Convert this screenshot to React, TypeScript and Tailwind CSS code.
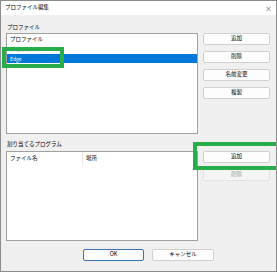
import React from "react";

const font = { fontFamily: '"Noto Sans CJK JP", "Noto Sans", sans-serif' };

function Btn({ label, disabled, primary }: { label: string; disabled?: boolean; primary?: boolean }) {
  return (
    <div
      className={
        "h-[12px] w-full flex items-center justify-center text-[5.5px] leading-none rounded-[2px] border " +
        (primary
          ? "border-[#3b6fa8] bg-[#fdfdfd] text-black"
          : disabled
          ? "border-[#e2e2e2] bg-[#f5f5f5] text-[#9a9a9a]"
          : "border-[#d0d0d0] bg-[#fdfdfd] text-black")
      }
    >
      {label}
    </div>
  );
}

export default function App() {
  return (
    <div
      style={font}
      className="relative w-[277px] h-[272px] border border-[#8c8c8c] bg-[#f0f0f0] flex flex-col overflow-hidden"
    >
      {/* title bar */}
      <div className="h-[14px] bg-white flex items-center justify-between pl-[4px] pr-[4px] shrink-0">
        <span className="text-[5.5px] leading-none text-black">プロファイル編集</span>
        <span className="text-[7px] leading-none text-[#444]">×</span>
      </div>

      {/* body */}
      <div className="flex flex-col pl-[5px] pr-[5px]">
        <div className="mt-[9px] h-[8px] flex items-center text-[5.5px] leading-none text-black pl-[1px]">
          プロファイル
        </div>
        <div className="mt-[1px] flex">
          <div className="w-[192px] h-[101px] bg-white border border-[#a0a0a0] flex flex-col">
            <div className="h-[11px] flex items-center pl-[3px] text-[5.5px] leading-none text-black">
              プロファイル
            </div>
            <div className="h-[9px] flex items-center pl-[3px] text-[5.5px] leading-none text-[#c8c8c8]">
              プロファイル
            </div>
            <div className="h-[9px] bg-[#0078d7] flex items-center pl-[3px] text-[5px] leading-none text-white">
              Edge
            </div>
          </div>
          <div className="ml-[5px] w-[67px] flex flex-col gap-[6px]">
            <Btn label="追加" />
            <Btn label="削除" />
            <Btn label="名前変更" />
            <Btn label="複製" />
          </div>
        </div>

        <div className="mt-[7px] h-[8px] flex items-center text-[5.5px] leading-none text-black pl-[1px]">
          割り当てるプログラム
        </div>
        <div className="mt-[2px] flex">
          <div className="w-[192px] h-[90px] bg-white border border-[#a0a0a0] flex flex-col">
            <div className="h-[13px] flex items-center text-[5.5px] leading-none text-black">
              <div className="w-[76px] pl-[3px] flex items-center h-full border-r border-[#e5e5e5]">ファイル名</div>
              <div className="pl-[3px]">場所</div>
            </div>
          </div>
          <div className="ml-[5px] w-[67px] flex flex-col gap-[6px]">
            <Btn label="追加" />
            <Btn label="削除" disabled />
          </div>
        </div>

        <div className="mt-[8px] flex pl-[77px] gap-[8px]">
          <div className="w-[61px]">
            <Btn label="OK" primary />
          </div>
          <div className="w-[62px]">
            <Btn label="キャンセル" />
          </div>
        </div>
      </div>

      {/* annotation boxes */}
      <div className="absolute left-[1px] top-[46px] w-[62px] h-[21px] border-[4px] border-[#27ae4a]" />
      <div className="absolute left-[192px] top-[141px] w-[90px] h-[28px] border-[4px] border-[#27ae4a]" />
    </div>
  );
}
